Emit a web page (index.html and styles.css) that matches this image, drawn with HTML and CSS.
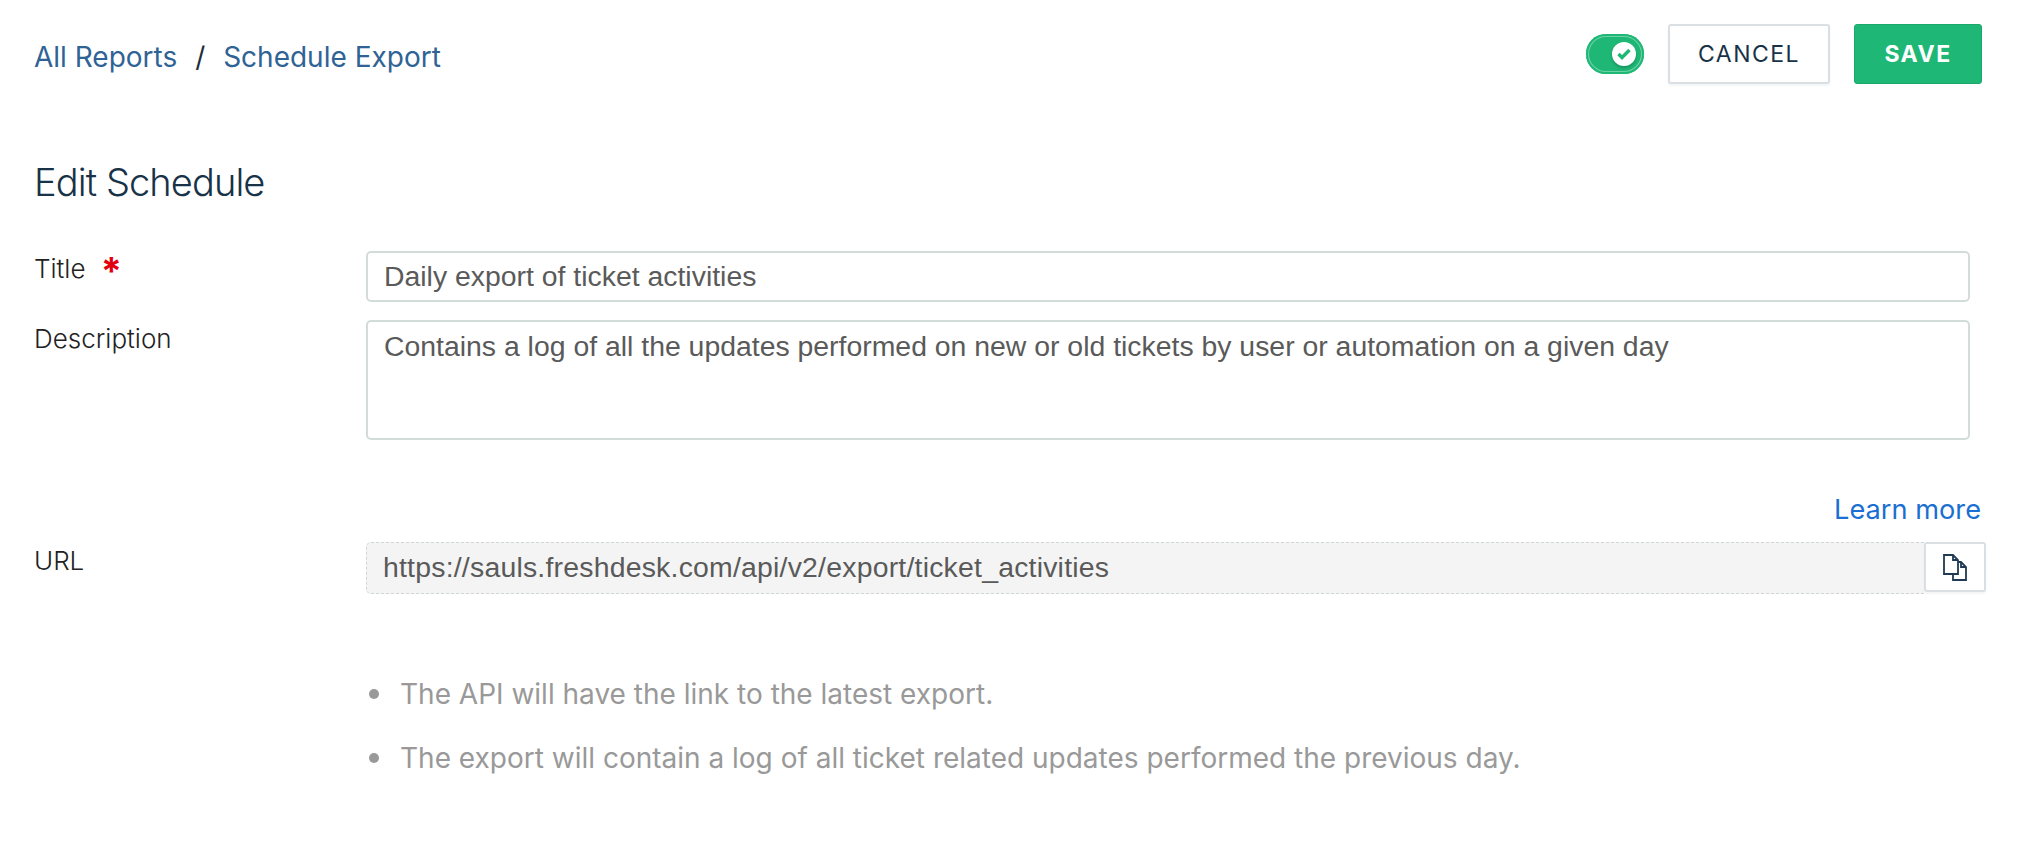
FILE: index.html
```html
<!DOCTYPE html>
<html lang="en">
<head>
    <meta charset="UTF-8">
    <title>Edit Schedule</title>
    <link rel="stylesheet" href="styles.css">
</head>
<body>
<header class="top-bar">
    <nav class="breadcrumb">
        <a href="#">All Reports</a>
        <span class="breadcrumb-sep">/</span>
        <a href="#">Schedule Export</a>
    </nav>
    <div class="actions">
        <span class="toggle">
            <span class="toggle-knob">
                <svg width="14" height="12" viewBox="0 0 14 12"><path d="M1.5 6 L5 9.5 L12.5 2" fill="none" stroke="#1fb776" stroke-width="3.4"/></svg>
            </span>
        </span>
        <button class="btn btn-cancel">CANCEL</button>
        <button class="btn btn-save">SAVE</button>
    </div>
</header>
<main class="content">
    <h1 class="page-title">Edit Schedule</h1>
    <div class="form-row title-row">
        <label class="form-label">Title <span class="required">*</span></label>
        <input class="field" type="text" value="Daily export of ticket activities">
    </div>
    <div class="form-row description-row">
        <label class="form-label">Description</label>
        <textarea class="field field-area">Contains a log of all the updates performed on new or old tickets by user or automation on a given day</textarea>
    </div>
    <div class="learn-more"><a href="#">Learn more</a></div>
    <div class="form-row url-row">
        <label class="form-label">URL</label>
        <div class="url-box">
            <input class="url-field" type="text" readonly value="https://sauls.freshdesk.com/api/v2/export/ticket_activities">
            <button class="copy-btn">
                <svg width="24" height="27" viewBox="0 0 24 27">
                    <path d="M1 1 H10 L15 6 V20 H1 Z M10 1 V6 H15" fill="none" stroke="#1f3a52" stroke-width="1.8"/>
                    <path d="M15 8 H18 L23 13 V26 H10 V20 M18 8 V13 H23" fill="none" stroke="#1f3a52" stroke-width="1.8"/>
                </svg>
            </button>
        </div>
    </div>
    <ul class="notes">
        <li>The API will have the link to the latest export.</li>
        <li>The export will contain a log of all ticket related updates performed the previous day.</li>
    </ul>
</main>
</body>
</html>
```

FILE: styles.css
```css
body {
    font-family: Inter, "Liberation Sans", sans-serif;
    margin: 0;
    padding: 0;
    background: #fff;
}

.top-bar {
    display: flex;
    justify-content: space-between;
    align-items: center;
    height: 60px;
    padding: 24px 52px 0 34px;
}

.breadcrumb {
    padding-top: 6px;
    font-size: 28px;
    color: #1f2d3a;
}

.breadcrumb a {
    color: #2f6396;
    text-decoration: none;
}

.breadcrumb-sep {
    margin: 0 10px;
}

.actions {
    display: flex;
    align-items: center;
}

.toggle {
    display: flex;
    align-items: center;
    justify-content: flex-end;
    box-sizing: border-box;
    width: 58px;
    height: 40px;
    padding-right: 8px;
    border-radius: 20px;
    background: #1fb776;
    box-shadow: inset 0 0 0 2px #1fb776, inset 0 0 0 3px #6fd2a6;
}

.toggle-knob {
    display: flex;
    align-items: center;
    justify-content: center;
    width: 24px;
    height: 24px;
    border-radius: 50%;
    background: #fff;
    box-shadow: 0 2px 3px rgba(0, 0, 0, 0.2);
}

.btn {
    box-sizing: border-box;
    height: 60px;
    font-family: Inter, "Liberation Sans", sans-serif;
    font-size: 23px;
    border-radius: 3px;
    letter-spacing: 1.5px;
}

.btn-cancel {
    width: 162px;
    margin-left: 24px;
    color: #183247;
    background: #fff;
    border: 2px solid #dadfe3;
    box-shadow: 0 2px 2px rgba(24, 50, 71, 0.05);
}

.btn-save {
    width: 128px;
    margin-left: 24px;
    color: #fff;
    font-weight: 700;
    background: #1fb776;
    border: 1px solid #1aa96b;
}

.content {
    padding: 0 48px 0 34px;
}

.page-title {
    margin: 72px 0 0;
    height: 52px;
    font-size: 38px;
    line-height: 52px;
    font-weight: 300;
    letter-spacing: -0.9px;
    color: #183247;
}

.form-row {
    display: flex;
    align-items: flex-start;
}

.title-row {
    margin-top: 43px;
    padding-right: 16px;
}

.description-row {
    margin-top: 18px;
    padding-right: 16px;
}

.form-label {
    flex: 0 0 332px;
    padding-top: 3px;
    font-size: 26px;
    line-height: 32px;
    font-weight: 300;
    color: #222;
}

.title-row .form-label {
    padding-top: 2px;
}

.required {
    margin-left: 8px;
    font-size: 38px;
    line-height: 24px;
    font-weight: 700;
    color: #e0000f;
    vertical-align: -7px;
}

.field {
    flex: 1;
    box-sizing: border-box;
    height: 51px;
    min-width: 0;
    margin: 0;
    padding: 0 16px;
    font-family: "Liberation Sans", Arial, sans-serif;
    font-size: 28.4px;
    color: #5a5a5a;
    background: #fff;
    border: 2px solid #d3dcdb;
    border-radius: 5px;
    outline: none;
}

.field-area {
    height: 120px;
    padding-top: 8px;
    line-height: 32px;
    resize: none;
}

.learn-more {
    margin-top: 54px;
    height: 32px;
    padding-right: 5px;
    text-align: right;
    font-size: 27.2px;
    line-height: 32px;
}

.learn-more a {
    color: #1a6fd1;
    text-decoration: none;
}

.url-row {
    margin-top: 16px;
}

.url-box {
    flex: 1;
    display: flex;
    min-width: 0;
    height: 52px;
}

.url-field {
    flex: 1;
    box-sizing: border-box;
    min-width: 0;
    height: 52px;
    padding: 0 16px 2px;
    font-family: "Liberation Sans", Arial, sans-serif;
    font-size: 28.4px;
    letter-spacing: 0.22px;
    color: #5a5a5a;
    background: #f4f4f4;
    border: 1px dashed #ced6d6;
    border-right: 0;
    border-radius: 5px 0 0 5px;
    outline: none;
}

.copy-btn {
    display: flex;
    align-items: center;
    justify-content: center;
    box-sizing: border-box;
    width: 62px;
    height: 50px;
    padding: 0;
    background: #fff;
    border: 2px solid #dadfe3;
    border-radius: 3px;
    box-shadow: 0 2px 2px rgba(24, 50, 71, 0.05);
}

.notes {
    margin: 84px 0 0 332px;
    padding: 0;
    list-style: none;
}

.notes li {
    display: flex;
    align-items: center;
    height: 32px;
    margin-bottom: 32px;
    font-size: 28px;
    color: #999;
}

.notes li::before {
    content: "";
    flex: 0 0 10px;
    height: 10px;
    margin: 0 21px 0 3px;
    border-radius: 50%;
    background: #999;
}
```
